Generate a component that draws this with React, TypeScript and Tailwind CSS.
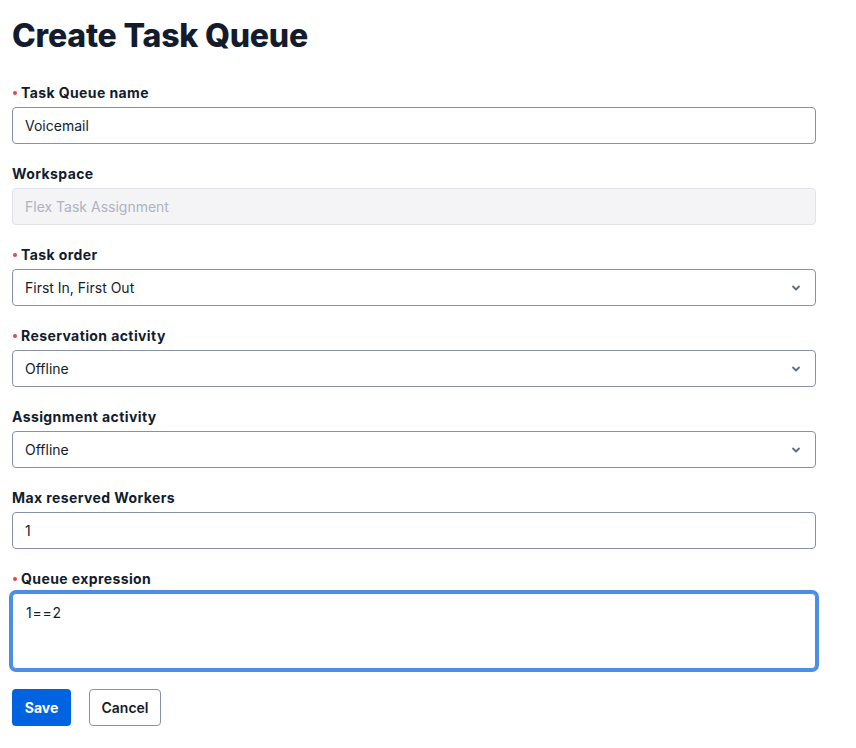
import React from 'react';

function Chevron() {
  return (
    <svg className="w-3 h-3 text-[#606b85]" viewBox="0 0 12 12" fill="none">
      <path d="M3 4.5 6 7.5 9 4.5" stroke="currentColor" strokeWidth={1.8} strokeLinecap="round" strokeLinejoin="round" />
    </svg>
  );
}

function Label({ text, required }: { text: string; required?: boolean }) {
  return (
    <div className="flex items-center h-5 mb-1 text-sm leading-5 font-bold tracking-[0.4px] text-[#121c2d]">
      {required && <span className="w-[4px] h-[4px] rounded-full bg-[#e0484e] ml-[1px] mr-[4px]" />}
      <span>{text}</span>
    </div>
  );
}

function TextField({ value, disabled }: { value: string; disabled?: boolean }) {
  return (
    <div
      className={
        disabled
          ? 'h-[37px] flex items-center px-3 rounded-[4px] border border-[#e1e3ea] bg-[#f4f4f6] text-sm text-[#aeb2c1]'
          : 'h-[37px] flex items-center px-3 rounded-[4px] border border-[#8891aa] bg-white text-sm text-[#121c2d]'
      }
    >
      {value}
    </div>
  );
}

function SelectField({ value }: { value: string }) {
  return (
    <div className="h-[37px] flex items-center justify-between pl-3 pr-[13px] rounded-[4px] border border-[#8891aa] bg-white text-sm text-[#121c2d]">
      <span>{value}</span>
      <Chevron />
    </div>
  );
}

export default function App() {
  return (
    <main className="min-h-screen bg-white pl-3 pr-10 pt-4 font-['Inter','Liberation_Sans',sans-serif] text-[#121c2d]">
      {/* Heading */}
      <h1 className="text-[32px] leading-10 font-extrabold tracking-[-0.2px] mb-[27px]">Create Task Queue</h1>

      <div className="flex flex-col gap-5">
        <div>
          <Label text="Task Queue name" required />
          <TextField value="Voicemail" />
        </div>
        <div>
          <Label text="Workspace" />
          <TextField value="Flex Task Assignment" disabled />
        </div>
        <div>
          <Label text="Task order" required />
          <SelectField value="First In, First Out" />
        </div>
        <div>
          <Label text="Reservation activity" required />
          <SelectField value="Offline" />
        </div>
        <div>
          <Label text="Assignment activity" />
          <SelectField value="Offline" />
        </div>
        <div>
          <Label text="Max reserved Workers" />
          <TextField value="1" />
        </div>
        <div>
          <Label text="Queue expression" required />
          <div className="h-[76px] px-[13px] py-[9px] rounded-[4px] border border-[#4a8fe3] ring-[3px] ring-[#4a8fe3] bg-white text-sm leading-5 tracking-[0.8px] text-[#121c2d]">
            1==2
          </div>
        </div>

        {/* Actions */}
        <div className="flex items-center gap-[18px]">
          <button className="h-[37px] w-[59px] rounded-[4px] bg-[#0263e0] text-white text-sm font-bold">Save</button>
          <button className="h-[37px] w-[72px] rounded-[4px] border border-[#8891aa] bg-white text-[#121c2d] text-sm font-semibold">Cancel</button>
        </div>
      </div>
    </main>
  );
}
